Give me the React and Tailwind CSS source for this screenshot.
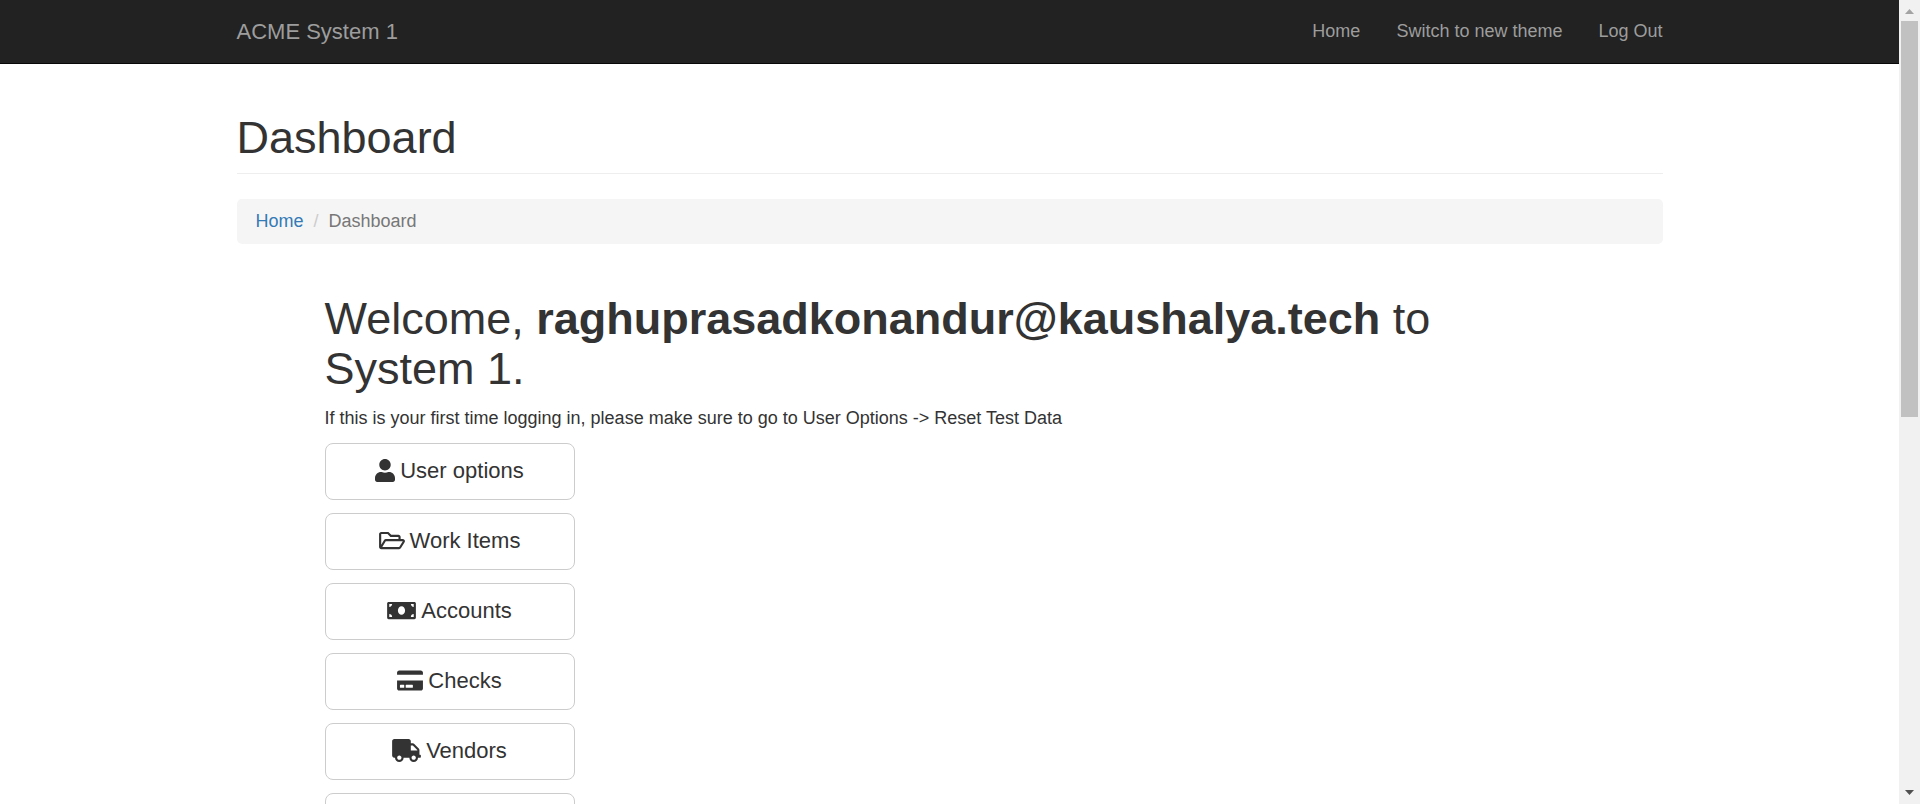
import { FaUser, FaRegFolderOpen, FaMoneyBill, FaCreditCard, FaTruck, FaFileAlt } from "react-icons/fa";

const navLinks = ["Home", "Switch to new theme", "Log Out"];

const sections = [
  { label: "User options", Icon: FaUser, iconClass: "h-[23px] w-5" },
  { label: "Work Items", Icon: FaRegFolderOpen, iconClass: "h-[23px] w-[26px]" },
  { label: "Accounts", Icon: FaMoneyBill, iconClass: "h-[23px] w-[29px]" },
  { label: "Checks", Icon: FaCreditCard, iconClass: "h-[23px] w-[26px]" },
  { label: "Vendors", Icon: FaTruck, iconClass: "h-[23px] w-[29px]" },
  { label: "Invoices", Icon: FaFileAlt, iconClass: "h-[23px] w-5" },
];

function Navbar() {
  return (
    <nav className="border-b border-[#080808] bg-[#222]">
      <div className="mx-auto flex h-[63px] w-full max-w-[1426px] items-center justify-between text-[#9d9d9d]">
        <a href="#" className="text-[22px]">ACME System 1</a>
        <ul className="flex gap-9 text-[18px]">
          {navLinks.map((label) => (
            <li key={label}>
              <a href="#">{label}</a>
            </li>
          ))}
        </ul>
      </div>
    </nav>
  );
}

function Scrollbar() {
  return (
    <div className="flex w-[21px] shrink-0 flex-col items-center bg-[#f1f1f1]" aria-hidden="true">
      <svg className="h-[21px] w-[17px] shrink-0" viewBox="0 0 17 21">
        <path d="M4 14 8.5 9 13 14Z" fill="#a3a3a3" />
      </svg>
      <div className="flex w-[17px] flex-1 flex-col">
        <div className="basis-[52%] bg-[#c1c1c1]" />
      </div>
      <svg className="h-[21px] w-[17px] shrink-0" viewBox="0 0 17 21">
        <path d="M4 7 8.5 12 13 7Z" fill="#505050" />
      </svg>
    </div>
  );
}

export default function App() {
  return (
    <div className="flex h-screen bg-white font-['Liberation_Sans',Arial,sans-serif] text-[18px] leading-[25px] text-[#333]">
      <div className="min-w-0 flex-1 overflow-hidden">
        <Navbar />
        <main className="mx-auto w-full max-w-[1426px]">
          <h1 className="mt-[49px] border-b border-[#eee] pb-[10px] text-[45px] leading-[50px]">Dashboard</h1>
          <ol className="mt-[25px] flex rounded-[5px] bg-[#f5f5f5] px-[19px] py-[10px]">
            <li>
              <a href="#" className="text-[#337ab7]">Home</a>
            </li>
            <li className="px-[10px] text-[#ccc]" aria-hidden="true">/</li>
            <li className="text-[#777]">Dashboard</li>
          </ol>
          <div className="mx-[88px] mt-[50px]">
            <h1 className="text-[45px] leading-[50px]">
              Welcome, <strong>raghuprasadkonandur@kaushalya.tech</strong> to System 1.
            </h1>
            <p className="mt-3">
              If this is your first time logging in, please make sure to go to User Options -&gt; Reset Test Data
            </p>
            <div className="mt-3 flex w-[250px] flex-col gap-[13px]">
              {sections.map(({ label, Icon, iconClass }) => (
                <button
                  key={label}
                  type="button"
                  className="flex h-[57px] shrink-0 items-center justify-center gap-[5px] rounded-[8px] border border-[#ccc] bg-white pb-0.5 text-[22px]"
                >
                  <Icon className={iconClass} />
                  {label}
                </button>
              ))}
            </div>
          </div>
        </main>
      </div>
      <Scrollbar />
    </div>
  );
}
